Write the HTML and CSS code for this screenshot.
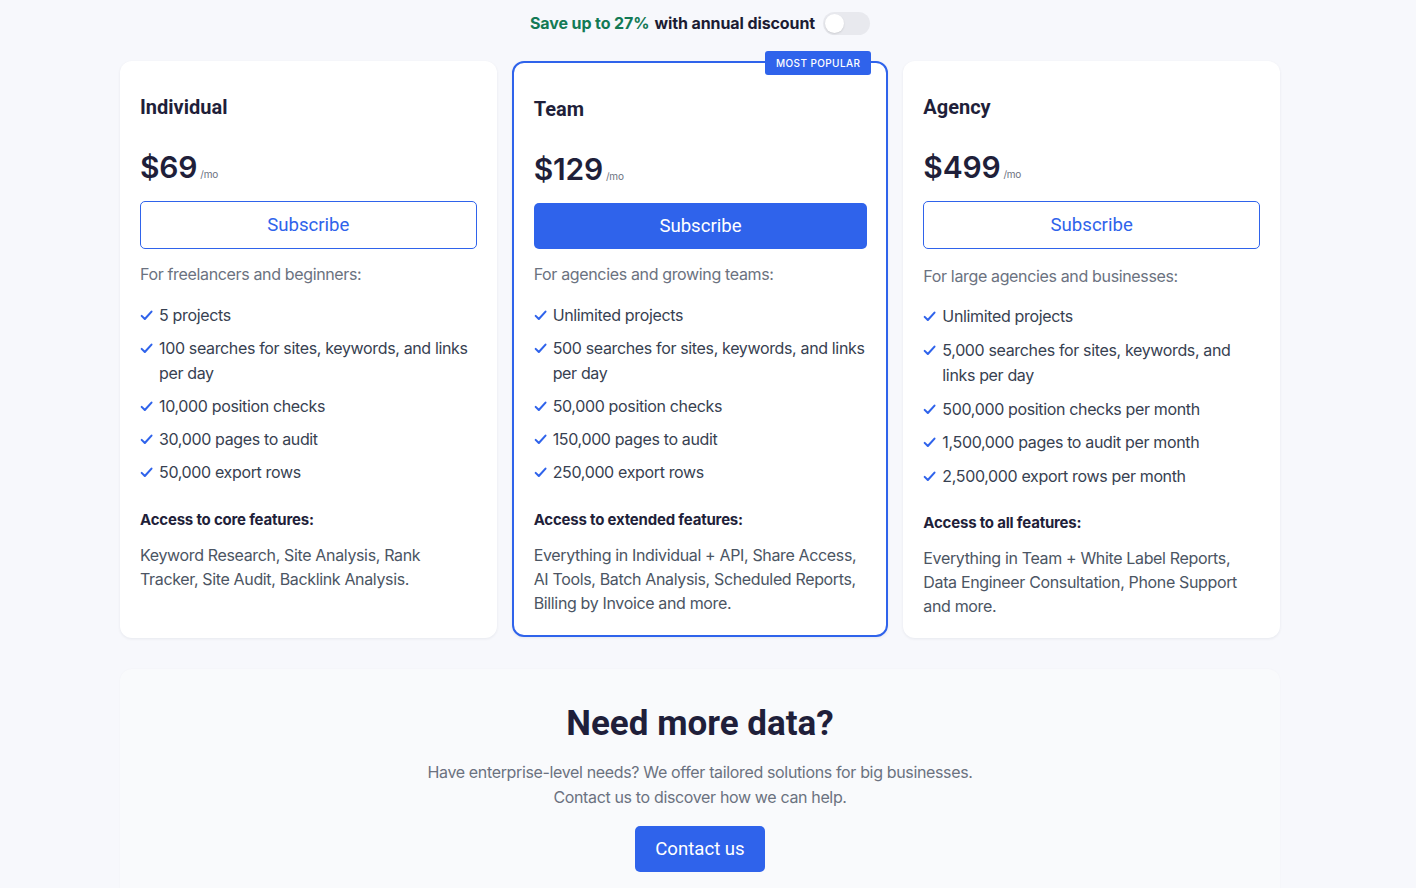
FILE: index.html
```html
<!DOCTYPE html>
<html lang="en">
<head>
<meta charset="utf-8">
<title>Pricing</title>
<link rel="stylesheet" href="styles.css">
</head>
<body>
<div class="page">
  <div class="discount">
    <span class="save">Save up to 27%</span>
    <span class="with">with annual discount</span>
    <span class="toggle"><span class="knob"></span></span>
  </div>

  <div class="plans">
    <div class="card">
      <h2 class="title">Individual</h2>
      <div class="price"><span class="amount">$69</span><span class="per">/mo</span></div>
      <button class="btn btn-outline">Subscribe</button>
      <p class="desc">For freelancers and beginners:</p>
      <ul class="features">
        <li><svg class="check" viewBox="0 0 14 14"><path d="M1.8 7.4 L5.2 10.8 L12.4 2.8"/></svg><span>5 projects</span></li>
        <li><svg class="check" viewBox="0 0 14 14"><path d="M1.8 7.4 L5.2 10.8 L12.4 2.8"/></svg><span>100 searches for sites, keywords, and links per day</span></li>
        <li><svg class="check" viewBox="0 0 14 14"><path d="M1.8 7.4 L5.2 10.8 L12.4 2.8"/></svg><span>10,000 position checks</span></li>
        <li><svg class="check" viewBox="0 0 14 14"><path d="M1.8 7.4 L5.2 10.8 L12.4 2.8"/></svg><span>30,000 pages to audit</span></li>
        <li><svg class="check" viewBox="0 0 14 14"><path d="M1.8 7.4 L5.2 10.8 L12.4 2.8"/></svg><span>50,000 export rows</span></li>
      </ul>
      <h3 class="access">Access to core features:</h3>
      <p class="more">Keyword Research, Site Analysis, Rank Tracker, Site Audit, Backlink Analysis.</p>
    </div>

    <div class="card card-popular">
      <span class="badge">MOST POPULAR</span>
      <h2 class="title">Team</h2>
      <div class="price"><span class="amount">$129</span><span class="per">/mo</span></div>
      <button class="btn btn-solid">Subscribe</button>
      <p class="desc">For agencies and growing teams:</p>
      <ul class="features">
        <li><svg class="check" viewBox="0 0 14 14"><path d="M1.8 7.4 L5.2 10.8 L12.4 2.8"/></svg><span>Unlimited projects</span></li>
        <li><svg class="check" viewBox="0 0 14 14"><path d="M1.8 7.4 L5.2 10.8 L12.4 2.8"/></svg><span>500 searches for sites, keywords, and links per day</span></li>
        <li><svg class="check" viewBox="0 0 14 14"><path d="M1.8 7.4 L5.2 10.8 L12.4 2.8"/></svg><span>50,000 position checks</span></li>
        <li><svg class="check" viewBox="0 0 14 14"><path d="M1.8 7.4 L5.2 10.8 L12.4 2.8"/></svg><span>150,000 pages to audit</span></li>
        <li><svg class="check" viewBox="0 0 14 14"><path d="M1.8 7.4 L5.2 10.8 L12.4 2.8"/></svg><span>250,000 export rows</span></li>
      </ul>
      <h3 class="access">Access to extended features:</h3>
      <p class="more">Everything in Individual + API, Share Access, AI Tools, Batch Analysis, Scheduled Reports, Billing by Invoice and more.</p>
    </div>

    <div class="card card-agency">
      <h2 class="title">Agency</h2>
      <div class="price"><span class="amount">$499</span><span class="per">/mo</span></div>
      <button class="btn btn-outline">Subscribe</button>
      <p class="desc">For large agencies and businesses:</p>
      <ul class="features">
        <li><svg class="check" viewBox="0 0 14 14"><path d="M1.8 7.4 L5.2 10.8 L12.4 2.8"/></svg><span>Unlimited projects</span></li>
        <li><svg class="check" viewBox="0 0 14 14"><path d="M1.8 7.4 L5.2 10.8 L12.4 2.8"/></svg><span>5,000 searches for sites, keywords, and links per day</span></li>
        <li><svg class="check" viewBox="0 0 14 14"><path d="M1.8 7.4 L5.2 10.8 L12.4 2.8"/></svg><span>500,000 position checks per month</span></li>
        <li><svg class="check" viewBox="0 0 14 14"><path d="M1.8 7.4 L5.2 10.8 L12.4 2.8"/></svg><span>1,500,000 pages to audit per month</span></li>
        <li><svg class="check" viewBox="0 0 14 14"><path d="M1.8 7.4 L5.2 10.8 L12.4 2.8"/></svg><span>2,500,000 export rows per month</span></li>
      </ul>
      <h3 class="access">Access to all features:</h3>
      <p class="more">Everything in Team + White Label Reports, Data Engineer Consultation, Phone Support and more.</p>
    </div>
  </div>

  <section class="enterprise">
    <h2 class="ent-title">Need more data?</h2>
    <p class="ent-text">Have enterprise-level needs? We offer tailored solutions for big businesses.<br>Contact us to discover how we can help.</p>
    <button class="btn-contact">Contact us</button>
  </section>
</div>
</body>
</html>
```

FILE: styles.css
```css
* { box-sizing: border-box; }
html, body { margin: 0; padding: 0; }
body {
  background: #f7f8fc;
  font-family: Inter, "Liberation Sans", sans-serif;
  color: #374151;
  overflow: hidden;
}
.page {
  width: 1400px;
  display: flex;
  flex-direction: column;
  align-items: center;
}
.discount {
  display: flex;
  align-items: center;
  gap: 5px;
  height: 46px;
  font-size: 16px;
  font-weight: 700;
  letter-spacing: -0.1px;
}
.save { color: #137a55; }
.with { color: #1c1c33; }
.toggle {
  width: 47px;
  height: 23px;
  margin-left: 3px;
  border-radius: 12px;
  background: #e8e9ee;
  display: flex;
  align-items: center;
  padding: 2px;
}
.knob {
  width: 19px;
  height: 19px;
  border-radius: 50%;
  background: #fff;
  box-shadow: 0 1px 2px rgba(0,0,0,0.12);
}
.plans {
  width: 1160px;
  margin-top: 15px;
  display: grid;
  grid-template-columns: repeat(3, 1fr);
  gap: 15px;
  align-items: stretch;
}
.card {
  position: relative;
  background: #fff;
  border-radius: 12px;
  padding: 32px 20px 20px;
  box-shadow: 0 1px 3px rgba(20, 30, 60, 0.07);
}
.card-popular {
  border: 2px solid #2f63eb;
  padding: 32px 19px 20px 20px;
  margin-bottom: 1px;
}
.badge {
  position: absolute;
  top: -12px;
  right: 15px;
  background: #2f63eb;
  color: #fff;
  font-size: 10px;
  font-weight: 500;
  letter-spacing: 0.4px;
  height: 24px;
  line-height: 24px;
  padding: 0 11px;
  border-radius: 3px;
}
.title {
  margin: 0;
  font-family: Roboto, "Liberation Sans", sans-serif;
  font-size: 20px;
  font-weight: 700;
  line-height: 28px;
  color: #1f1f3a;
}
.price {
  margin-top: 28px;
  display: flex;
  align-items: baseline;
  gap: 3px;
  color: #1f1f3a;
}
.amount {
  font-size: 30px;
  font-weight: 600;
  line-height: 36px;
  letter-spacing: -0.2px;
}
.per {
  font-size: 10px;
  color: #6b7280;
  letter-spacing: -0.2px;
}
.btn {
  display: block;
  width: 100%;
  margin-top: 16px;
  height: 48px;
  border-radius: 5px;
  font-family: Roboto, "Liberation Sans", sans-serif;
  font-size: 18.6px;
  cursor: pointer;
}
.btn-outline {
  background: #fff;
  border: 1px solid #2f63eb;
  color: #2f63eb;
}
.btn-solid {
  height: 46px;
  background: #2f63eb;
  border: none;
  color: #fff;
}
.desc {
  margin: 13px 0 0;
  font-size: 16px;
  line-height: 24px;
  letter-spacing: -0.35px;
  color: #6b7280;
}
.card-agency .desc { margin-top: 15px; }
.features {
  list-style: none;
  margin: 17px 0 0;
  padding: 0;
  display: flex;
  flex-direction: column;
  gap: 8px;
}
.card-agency .features { margin-top: 16px; }
.features li {
  display: flex;
  align-items: flex-start;
  gap: 6px;
  font-size: 16px;
  line-height: 25px;
  letter-spacing: -0.35px;
  color: #374151;
}
.card-agency .features li { line-height: 25.5px; }
.check {
  flex: none;
  width: 13px;
  height: 13px;
  margin-top: 6px;
  fill: none;
  stroke: #2f63eb;
  stroke-width: 2.2;
  stroke-linecap: round;
  stroke-linejoin: round;
}
.access {
  margin: 23px 0 0;
  font-size: 15px;
  font-weight: 700;
  line-height: 24px;
  letter-spacing: -0.2px;
  color: #1f1f3a;
}
.card-agency .access { margin-top: 22px; }
.more {
  margin: 11px 0 0;
  font-size: 16px;
  line-height: 24px;
  letter-spacing: -0.35px;
  color: #4b5563;
}
.enterprise {
  width: 1160px;
  margin-top: 31px;
  padding: 33px 20px 40px;
  border-radius: 12px;
  background: #f9fafc;
  box-shadow: 0 0 2px rgba(20, 30, 60, 0.03);
  display: flex;
  flex-direction: column;
  align-items: center;
  text-align: center;
}
.ent-title {
  margin: 0;
  font-family: Roboto, "Liberation Sans", sans-serif;
  font-size: 35px;
  font-weight: 700;
  line-height: 44px;
  color: #1f1f3a;
}
.ent-text {
  margin: 14px 0 0;
  font-size: 16px;
  line-height: 25px;
  letter-spacing: -0.35px;
  color: #6b7280;
}
.btn-contact {
  margin-top: 16px;
  width: 130px;
  height: 46px;
  background: #2f63eb;
  color: #fff;
  border: none;
  border-radius: 5px;
  font-family: Roboto, "Liberation Sans", sans-serif;
  font-size: 18.6px;
  cursor: pointer;
}
```
